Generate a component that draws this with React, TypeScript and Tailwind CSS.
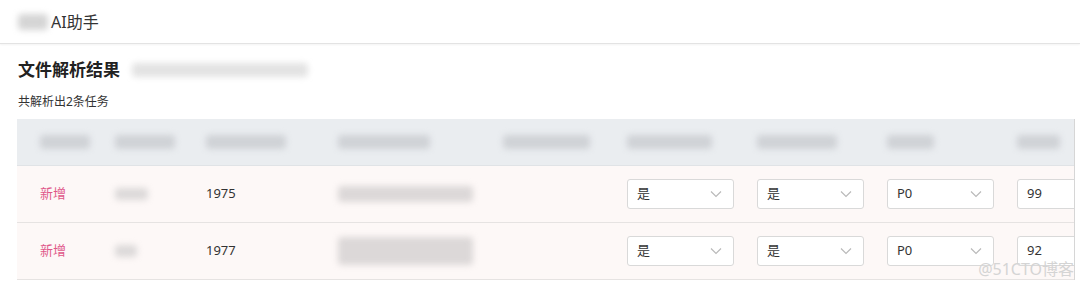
import React from 'react'

// 列宽（px），与截图对齐
const COLS = ['w-[82px] pl-[23px]', 'w-[91px] pl-4', 'w-[132px] pl-4', 'w-[165px] pl-4', 'w-[124px] pl-4', 'w-[130px] pl-4', 'w-[130px] pl-4', 'w-[130px] pl-4', 'w-[130px] pl-4']

const HEAD_BLURS = ['w-[50px]', 'w-[60px]', 'w-[80px]', 'w-[92px]', 'w-[87px]', 'w-[85px]', 'w-[80px]', 'w-[47px]', 'w-[43px]']

const rows = [
    { id: '1975', p: 'P0', score: '99', short: 'w-[33px] h-[12px]', long: 'h-[16px]' },
    { id: '1977', p: 'P0', score: '92', short: 'w-[22px] h-[12px]', long: 'h-[28px]' },
]

const Blur: React.FC<{ className: string }> = ({ className }) => (
    <div className={`rounded-sm blur-[3px] ${className}`} />
)

const Chevron = () => (
    <svg width="14" height="14" viewBox="0 0 14 14" fill="none" stroke="#b8b8b8" strokeWidth="1.1">
        <path d="M2 4.5 L7 9.5 L12 4.5" />
    </svg>
)

const Select: React.FC<{ value: string }> = ({ value }) => (
    <div className="flex h-[30px] w-[107px] items-center justify-between rounded-[3px] border border-[#d9d9d9] bg-white pl-[9px] pr-[10px] text-[13px] text-[#333]">
        <span>{value}</span>
        <Chevron />
    </div>
)

export default function App() {
    return (
        <div className="relative h-[287px] w-[1080px] overflow-hidden bg-white" style={{ fontFamily: '"Noto Sans", "Noto Sans CJK SC", sans-serif' }}>
            {/* 顶部标题栏 */}
            <div className="flex h-[44px] items-center border-b border-[#e3e3e3] pl-[18px] shadow-[0_1px_2px_rgba(0,0,0,0.05)]">
                <Blur className="mr-[3px] h-[16px] w-[30px] bg-[#d5d5d5]" />
                <span className="text-[16px] text-[#333]">AI助手</span>
            </div>

            <div className="pl-[17px]">
                {/* 结果标题 */}
                <div className="mt-[13px] flex h-[26px] items-center pl-[1px]">
                    <span className="text-[17px] font-bold text-[#222]">文件解析结果</span>
                    <Blur className="ml-[12px] h-[14px] w-[176px] bg-[#e3e3e3]" />
                </div>
                <div className="mt-[9px] pl-[1px] text-[12px] leading-[20px] text-[#333]">共解析出2条任务</div>

                {/* 表格 */}
                <div className="mt-[7px] w-[1058px] overflow-hidden border-r border-[#d6d6d6]">
                    <div className="flex h-[47px] w-max items-center border-b border-[#e0e3e6] bg-[#eaedf0]">
                        {COLS.map((c, i) => (
                            <div key={i} className={`${c} flex shrink-0 items-center`}>
                                <Blur className={`${HEAD_BLURS[i]} h-[14px] bg-[#cfd2d6]`} />
                            </div>
                        ))}
                    </div>
                    {rows.map(r => (
                        <div key={r.id} className="flex h-[57px] w-max items-center border-b border-[#e6e3e2] bg-[#fdf8f7] text-[13px] text-[#333]">
                            <div className={`${COLS[0]} shrink-0 text-[#e0588a]`}>新增</div>
                            <div className={`${COLS[1]} shrink-0`}>
                                <Blur className={`${r.short} bg-[#dcd9d9]`} />
                            </div>
                            <div className={`${COLS[2]} shrink-0`}>{r.id}</div>
                            <div className={`${COLS[3]} shrink-0`}>
                                <Blur className={`w-[135px] ${r.long} bg-[#dcd8d8]`} />
                            </div>
                            <div className={`${COLS[4]} shrink-0`} />
                            <div className={`${COLS[5]} shrink-0`}><Select value="是" /></div>
                            <div className={`${COLS[6]} shrink-0`}><Select value="是" /></div>
                            <div className={`${COLS[7]} shrink-0`}><Select value={r.p} /></div>
                            <div className={`${COLS[8]} shrink-0`}>
                                <div className="flex h-[30px] w-[100px] items-center rounded-[3px] border border-[#d9d9d9] bg-white pl-[9px]">{r.score}</div>
                            </div>
                        </div>
                    ))}
                </div>
            </div>

            {/* 水印 */}
            <div className="absolute bottom-[6px] right-[6px] text-[16px] text-[#d4d4d4]">@51CTO博客</div>
        </div>
    )
}
